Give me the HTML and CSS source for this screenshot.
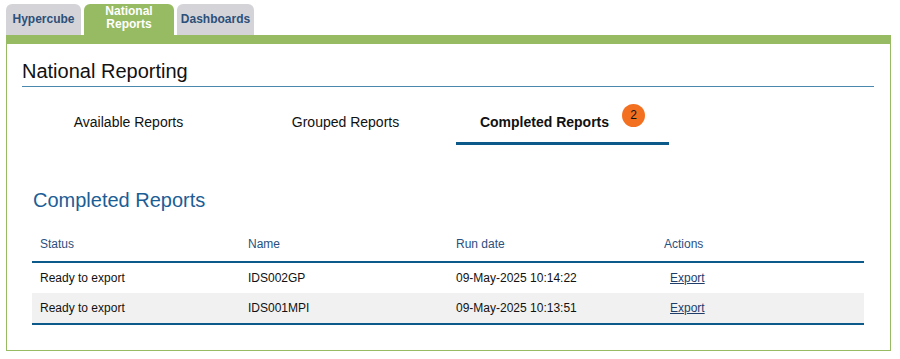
FILE: index.html
```html
<!DOCTYPE html>
<html lang="en">
<head>
    <meta charset="UTF-8">
    <meta name="viewport" content="width=device-width, initial-scale=1.0">
    <title>National Reporting</title>
    <link rel="stylesheet" href="styles.css">
</head>
<body>

    <nav class="tabs">
        <a class="tab tab-hypercube" href="#">Hypercube</a>
        <a class="tab tab-national active" href="#">National<br>Reports</a>
        <a class="tab tab-dashboards" href="#">Dashboards</a>
    </nav>

    <div class="panel">
        <h1 class="page-title">National Reporting</h1>

        <div class="report-tabs">
            <div class="report-tab">Available Reports</div>
            <div class="report-tab">Grouped Reports</div>
            <div class="report-tab selected">
                <span>Completed Reports</span>
                <span class="badge">2</span>
            </div>
        </div>

        <section class="completed">
            <h2>Completed Reports</h2>

            <table class="reports">
                <thead>
                    <tr>
                        <th>Status</th>
                        <th>Name</th>
                        <th>Run date</th>
                        <th>Actions</th>
                    </tr>
                </thead>
                <tbody>
                    <tr>
                        <td>Ready to export</td>
                        <td>IDS002GP</td>
                        <td>09-May-2025 10:14:22</td>
                        <td><a class="export" href="#">Export</a></td>
                    </tr>
                    <tr>
                        <td>Ready to export</td>
                        <td>IDS001MPI</td>
                        <td>09-May-2025 10:13:51</td>
                        <td><a class="export" href="#">Export</a></td>
                    </tr>
                </tbody>
            </table>
        </section>
    </div>

</body>
</html>
```

FILE: styles.css
```css
body {
    margin: 0;
    padding: 4px 9px 0 6px;
    background: #fff;
    font-family: "Liberation Sans", Arial, sans-serif;
    color: #111;
}

.tabs {
    display: flex;
    gap: 3px;
    height: 31px;
}

.tab {
    display: flex;
    align-items: center;
    justify-content: center;
    text-align: center;
    font-size: 12px;
    font-weight: bold;
    line-height: 13px;
    color: #2d4f78;
    text-decoration: none;
    background: #d4d4d8;
    border-radius: 6px 6px 0 0;
}

.tab-hypercube {
    width: 75px;
}

.tab-national {
    width: 90px;
    align-items: flex-start;
    padding-top: 1px;
}

.tab-dashboards {
    width: 77px;
}

.tab.active {
    background: #97bb63;
    color: #fff;
}

.panel {
    border: 1px solid #97bb63;
    border-top: 9px solid #97bb63;
    padding: 0 16px 25px 15px;
}

.page-title {
    margin: 16px 0 0;
    padding-bottom: 3px;
    font-size: 20px;
    font-weight: normal;
    color: #111;
    border-bottom: 1px solid #4a88ad;
}

.report-tabs {
    display: flex;
    gap: 4px;
}

.report-tab {
    width: 213px;
    display: flex;
    justify-content: center;
    align-items: flex-start;
    gap: 13px;
    padding: 27px 0 12px;
    font-size: 14px;
    line-height: 16px;
    border-bottom: 3px solid transparent;
}

.report-tab.selected {
    font-weight: bold;
    border-bottom-color: #0b5a8a;
}

.badge {
    width: 23px;
    height: 23px;
    margin-top: -10px;
    border-radius: 50%;
    background: #f37021;
    color: #111;
    font-size: 12px;
    font-weight: normal;
    line-height: 23px;
    text-align: center;
}

.completed {
    padding: 0 10px;
}

.completed h2 {
    margin: 44px 0 15px 1px;
    font-size: 20px;
    font-weight: normal;
    color: #1b5e96;
}

.reports {
    width: 100%;
    border-collapse: collapse;
    table-layout: fixed;
    font-size: 12px;
    line-height: 14px;
    border-bottom: 2px solid #0b5a8a;
}

.reports th {
    text-align: left;
    font-weight: normal;
    color: #2a5080;
    padding: 10px 8px;
    border-bottom: 2px solid #0b5a8a;
}

.reports td {
    padding: 8px 8px;
    color: #111;
}

.reports tbody tr:nth-child(even) {
    background: #f1f1f1;
}

.export {
    margin-left: 6px;
    color: #1f3d6b;
}
```
